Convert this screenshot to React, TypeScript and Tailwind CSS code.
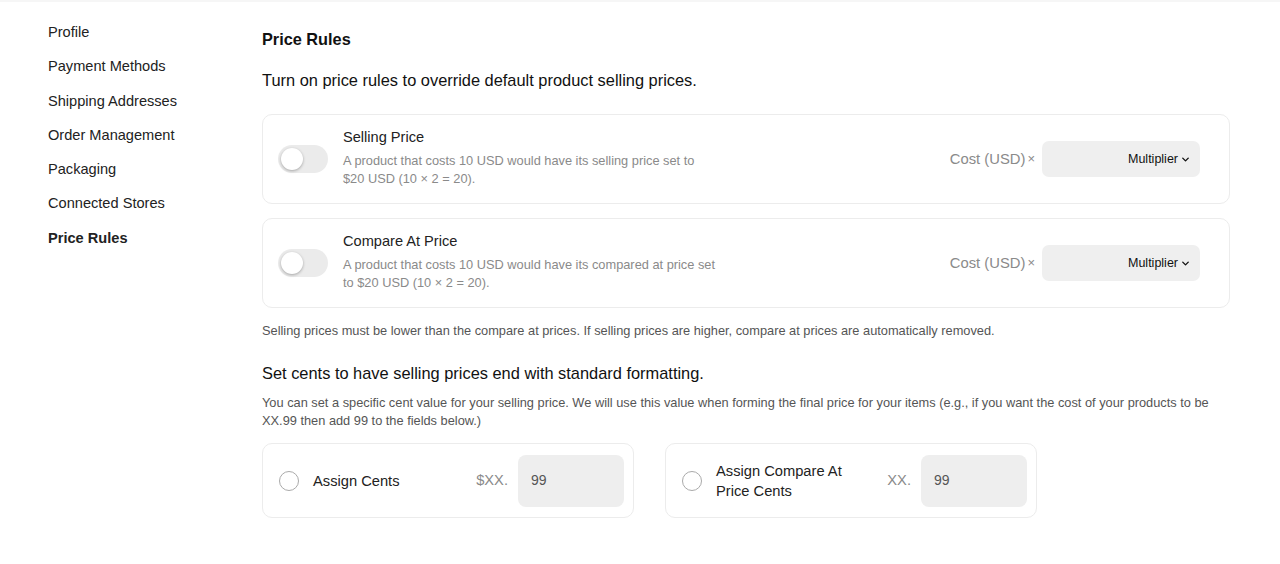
import { ChevronDown } from "lucide-react";

const navItems = [
    "Profile",
    "Payment Methods",
    "Shipping Addresses",
    "Order Management",
    "Packaging",
    "Connected Stores",
    "Price Rules",
];

function Toggle() {
    return (
        <div className="w-[50px] h-[28px] rounded-full bg-[#ebebeb] flex items-center px-[3px] shrink-0">
            <div className="size-[22px] rounded-full bg-white shadow-[0_1px_3px_rgba(0,0,0,0.3)]"></div>
        </div>
    );
}

function RuleCard({ title, lines }: { title: string; lines: string[] }) {
    return (
        <div className="h-[90px] border border-[#ececec] rounded-[10px] flex items-center pl-[15px] pr-[29px]">
            <Toggle />
            <div className="ml-[15px] self-start pt-[13px] flex flex-col">
                <div className="text-[14.6px] text-[#222] leading-[18px]">{title}</div>
                <div className="mt-[6px] text-[12.8px] text-[#8a8a8a] leading-[18px]">
                    {lines.map((l) => (
                        <div key={l}>{l}</div>
                    ))}
                </div>
            </div>
            <div className="ml-auto flex items-center">
                <div className="text-[14.8px] text-[#8a8a8a]">Cost (USD)</div>
                <div className="ml-[2px] text-[13px] text-[#8a8a8a]">×</div>
                <div className="ml-[7px] w-[158px] h-[36px] rounded-[7px] bg-[#efefef] flex items-center justify-end pr-[9px] gap-[2px]">
                    <span className="text-[12.5px] text-[#111]">Multiplier</span>
                    <ChevronDown className="size-[11px] text-[#111]" strokeWidth={3} />
                </div>
            </div>
        </div>
    );
}

function CentsCard({ label, prefix }: { label: string[]; prefix: string }) {
    return (
        <div className="w-[372px] h-[75px] border border-[#ececec] rounded-[10px] flex items-center pl-[16px] pr-[9px]">
            <div className="size-[20px] rounded-full border border-[#aaa] shrink-0"></div>
            <div className="ml-[14px] text-[14.7px] text-[#222] leading-[20px]">
                {label.map((l) => (
                    <div key={l}>{l}</div>
                ))}
            </div>
            <div className="ml-auto text-[14.7px] text-[#8a8a8a]">{prefix}</div>
            <div className="ml-[10px] w-[106px] h-[52px] rounded-[8px] bg-[#eeeeee] flex items-center pl-[13px] text-[14px] text-[#555]">99</div>
        </div>
    );
}

export default function App() {
    return (
        <div className="w-[1280px] h-[564px] bg-white border-t-2 border-[#f6f6f6] flex font-['Liberation_Sans',Arial,sans-serif]">
            <div className="w-[262px] shrink-0 pl-[48px] pt-[20px] flex flex-col gap-[14.3px]">
                {navItems.map((item) => (
                    <div key={item} className={`text-[14.6px] leading-[20px] text-[#222] ${item === "Price Rules" ? "font-bold" : ""}`}>
                        {item}
                    </div>
                ))}
            </div>
            <div className="w-[968px] pt-[27px]">
                <div className="text-[16.3px] font-bold text-[#111] leading-[20px]">Price Rules</div>
                <div className="mt-[20px] text-[16.4px] text-[#111] leading-[22px]">Turn on price rules to override default product selling prices.</div>
                <div className="mt-[23px] flex flex-col gap-[14px]">
                    <RuleCard title="Selling Price" lines={["A product that costs 10 USD would have its selling price set to", "$20 USD (10 × 2 = 20)."]} />
                    <RuleCard title="Compare At Price" lines={["A product that costs 10 USD would have its compared at price set", "to $20 USD (10 × 2 = 20)."]} />
                </div>
                <div className="mt-[15px] text-[12.8px] text-[#555] leading-[16px]">
                    Selling prices must be lower than the compare at prices. If selling prices are higher, compare at prices are automatically removed.
                </div>
                <div className="mt-[24px] text-[16.4px] text-[#111] leading-[20px]">Set cents to have selling prices end with standard formatting.</div>
                <div className="mt-[11px] text-[12.8px] text-[#555] leading-[18px]">
                    You can set a specific cent value for your selling price. We will use this value when forming the final price for your items (e.g., if you want the cost of your products to be XX.99 then add 99 to the fields below.)
                </div>
                <div className="mt-[13px] flex gap-[31px]">
                    <CentsCard label={["Assign Cents"]} prefix="$XX." />
                    <CentsCard label={["Assign Compare At", "Price Cents"]} prefix="XX." />
                </div>
            </div>
        </div>
    );
}
